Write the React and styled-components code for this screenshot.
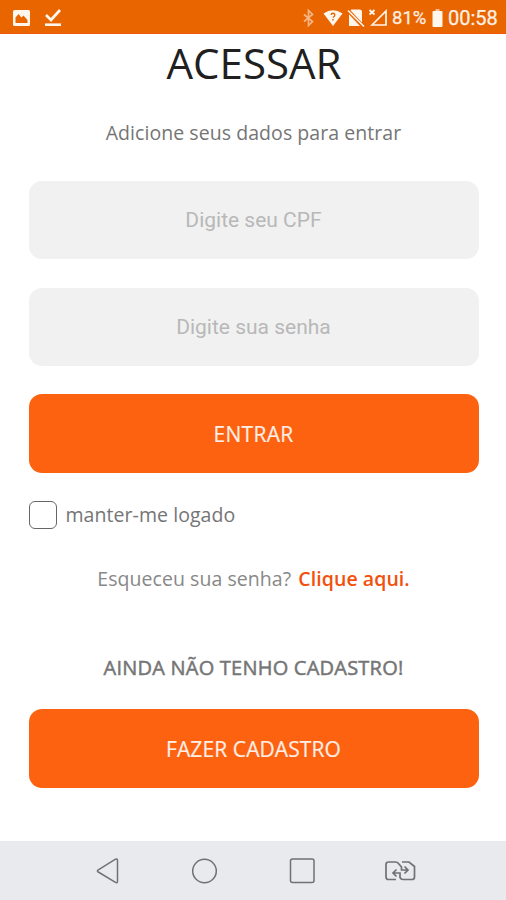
import React from 'react'
import styled, { createGlobalStyle } from 'styled-components'

const GlobalStyle = createGlobalStyle`
  * {
    box-sizing: border-box;
  }

  body {
    margin: 0;
    background: #ffffff;
    font-family: 'Open Sans', 'Noto Sans', sans-serif;
  }
`

// screen
const Screen = styled.div`
  display: flex;
  flex-direction: column;
  width: 506px;
  height: 900px;
  overflow: hidden;
`

// status bar
const StatusBar = styled.header`
  display: flex;
  justify-content: space-between;
  flex: none;
  height: 34px;
  padding: 0 8px 0 12px;
  background: #e96500;
  border-bottom: 1px solid #f0570e;
  font-family: Roboto, sans-serif;
  color: #fff1e6;
`

const StatusGroup = styled.div`
  display: flex;
  align-items: center;
  gap: ${props => props.$gap};
  height: 35px;
`

const StatusText = styled.span`
  width: ${props => props.$width};
  padding-top: 1px;
  font-size: ${props => props.$size};
  line-height: 24px;
  white-space: nowrap;
  -webkit-text-stroke: 0.25px #fff1e6;
`

const Icon = styled.svg`
  display: block;
  flex: none;
  overflow: visible;
`

// login form
const Form = styled.main`
  display: flex;
  flex-direction: column;
  flex: 1;
  padding: 0 28px;
`

const Title = styled.h1`
  margin: 0;
  padding-left: 2px;
  font-size: 42px;
  font-weight: 400;
  line-height: 58px;
  text-align: center;
  color: #202020;
`

const Text = styled.p`
  margin: ${props => props.$margin};
  padding-left: 1px;
  font-size: 19.5px;
  font-weight: 400;
  line-height: 28px;
  letter-spacing: 0.06px;
  text-align: center;
  white-space: nowrap;
  color: ${props => props.$color || '#757575'};
`

const Notice = styled(Text)`
  font-size: 20px;
  letter-spacing: 0.22px;
  -webkit-text-stroke: 0.5px #757575;
`

const Field = styled.input`
  flex: none;
  width: 450px;
  height: 78px;
  margin: 0 0 ${props => props.$bottom} 0.5px;
  padding: 0;
  border: 0;
  border-radius: 13px;
  background: #f1f1f1;
  font-family: Roboto, sans-serif;
  font-size: 21px;
  text-align: center;

  &::placeholder {
    color: #b8b8b8;
    opacity: 1;
  }
`

const Button = styled.button`
  flex: none;
  width: 450px;
  height: 79px;
  margin: 0 0 0 0.5px;
  padding: 1px 0 0;
  border: 0;
  border-radius: 13px;
  background: #fd6210;
  font-family: inherit;
  font-size: 21px;
  letter-spacing: ${props => props.$spacing || '0.1px'};
  color: #ffeee5;
  -webkit-text-stroke: 0.2px #ffeee5;
`

const Remember = styled.label`
  display: flex;
  align-items: center;
  height: 30px;
  margin-top: 27px;
`

const Checkbox = styled.input`
  appearance: none;
  flex: none;
  width: 28px;
  height: 28px;
  margin: 0 8px 0 0.5px;
  border: 1.5px solid #666666;
  border-radius: 6px;
  background: #ffffff;
`

const Link = styled.a`
  margin-left: 2px;
  font-weight: 600;
  color: #f2500b;
`

// navigation bar
const NavBar = styled.nav`
  display: flex;
  align-items: center;
  flex: none;
  gap: 72px;
  height: 59px;
  padding: 1px 0 0 96px;
  background: #e9eaed;
`

export default function App() {
  return (
    <Screen>
      <GlobalStyle />
      <StatusBar>
        <StatusGroup $gap="14px">
          <Icon width="18" height="18" viewBox="0 0 18 18">
            <rect x="1" y="1" width="17" height="16" rx="1.500" fill="#fff6ee" />
            <path d="M3.500 14V8.500l3-3.500 3 3.500 2-2 4 4.500v3z" fill="#e96500" />
          </Icon>
          <Icon width="18" height="18" viewBox="0 0 18 18" fill="none" stroke="#fff6ee">
            <path d="M2 6l5 5L16 1" strokeWidth="2.700" />
            <path d="M1 15.700h16" strokeWidth="2.600" />
          </Icon>
        </StatusGroup>
        <StatusGroup $gap="5px">
          <Icon width="13" height="18" viewBox="2 0 13 18" fill="none" stroke="#f6b686" strokeWidth="1.700">
            <path d="M1 5.500l8.500 7L5.500 16.500v-15L9.500 5.500 1 12.500" />
          </Icon>
          <Icon width="19" height="18" viewBox="0 0 19 18">
            <path d="M0.500 4.500Q10-1.800 19.500 4.500L10 17z" fill="#fff6ee" />
            <path d="M8.200 6q0-1.700 1.800-1.700T11.800 6q0 1.200-1.800 2.500M10 10v1.500" fill="none" stroke="#e96500" strokeWidth="1.400" />
          </Icon>
          <Icon width="17" height="18" viewBox="-1 0 17 18">
            <path d="M3.500 0.500H11.500Q14 0.500 14 3V17H1V3z" fill="#fff6ee" />
            <path d="M0 1.500l16 17" stroke="#e96500" strokeWidth="4" />
            <path d="M0 1.500l16 16" stroke="#fff6ee" strokeWidth="1.600" />
          </Icon>
          <Icon width="18" height="18" viewBox="0 0 18 18" fill="none" stroke="#fff6ee">
            <path d="M3 16L17 2v14z" strokeWidth="1.700" />
            <path d="M0.500 1l5 4.500M5.500 1l-5 4.500" strokeWidth="1.700" />
          </Icon>
          <StatusText $width="35px" $size="18.500px">81%</StatusText>
          <Icon width="11" height="18" viewBox="0 0 11 18">
            <path d="M3.500 0h4v2.500h-4z" fill="#f7bd92" />
            <rect x="0.500" y="2" width="10" height="16" rx="1" fill="#fff6ee" />
          </Icon>
          <StatusText $width="50px" $size="20px">00:58</StatusText>
        </StatusGroup>
      </StatusBar>

      <Form>
        <Title>ACESSAR</Title>
        <Text $margin="27px 0 34px">Adicione seus dados para entrar</Text>
        <Field type="text" placeholder="Digite seu CPF" $bottom="29px" />
        <Field type="password" placeholder="Digite sua senha" $bottom="28px" />
        <Button type="button" $spacing="0.3px">ENTRAR</Button>
        <Remember>
          <Checkbox type="checkbox" />
          <Text as="span" $margin="0">manter-me logado</Text>
        </Remember>
        <Text $margin="35px 0 0" $color="#888888">
          Esqueceu sua senha? <Link>Clique aqui.</Link>
        </Text>
        <Notice $margin="61px 0 27px">AINDA NÃO TENHO CADASTRO!</Notice>
        <Button type="button">FAZER CADASTRO</Button>
      </Form>

      <NavBar>
        <Icon width="24" height="26" viewBox="0 0 24 26" fill="none" stroke="#707174" strokeWidth="1.500">
          <path d="M2.300 11.800L19.500 1.200Q21.500 0.300 21.500 2.500V23Q21.500 25.500 19.500 24.300L2.300 14Q0.500 12.900 2.300 11.800z" />
        </Icon>
        <Icon width="26" height="26" viewBox="-1 0 26 26" fill="none" stroke="#707174" strokeWidth="1.500">
          <circle cx="11.500" cy="13" r="11.800" />
        </Icon>
        <Icon width="26" height="26" viewBox="0 0 26 26" fill="none" stroke="#707174" strokeWidth="1.500">
          <rect x="0.500" y="1" width="23.500" height="23.500" rx="2" />
        </Icon>
        <Icon width="30" height="26" viewBox="2 0 30 26" fill="none" stroke="#707174" strokeWidth="1.700">
          <path d="M10 21.500H2.500Q0 21.500 0 19V6.500Q0 4 2.500 4H9.500Q11.500 4 12.500 5.500L15.500 9V12H21.500M18.500 8.500L22 12l-3.500 3.500" />
          <path d="M16 4H23L28.500 8.500V19Q28.500 21.500 26 21.500H17Q15 21.500 14 19.500V15H7.500M10.500 11.500L7 15l3.500 3.500" />
        </Icon>
      </NavBar>
    </Screen>
  )
}
